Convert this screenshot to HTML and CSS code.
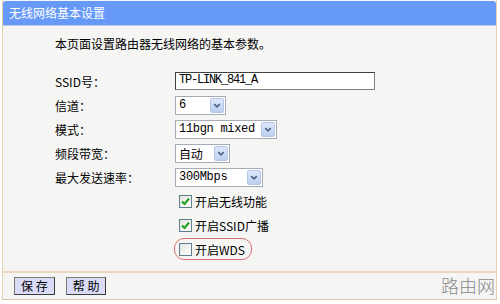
FILE: index.html
```html
<!DOCTYPE html>
<html lang="zh-CN">
<head>
    <meta charset="UTF-8">
    <title>无线网络基本设置</title>
    <link rel="stylesheet" href="styles.css">
</head>
<body>
    <div class="panel">
        <div class="panel-title">无线网络基本设置</div>

        <div class="panel-body">
            <p class="intro">本页面设置路由器无线网络的基本参数。</p>

            <div class="form">
                <div class="form-row">
                    <label class="form-label">SSID号：</label>
                    <div class="text-input">TP-LINK_841_A</div>
                </div>
                <div class="form-row">
                    <label class="form-label">信道：</label>
                    <div class="select select-channel">
                        <span class="select-value">6</span>
                        <span class="select-arrow"><svg viewBox="0 0 13 13" width="13" height="13"><path d="M3.5 5 L6.5 8 L9.5 5" fill="none" stroke="#4d6185" stroke-width="1.8"/></svg></span>
                    </div>
                </div>
                <div class="form-row">
                    <label class="form-label">模式：</label>
                    <div class="select select-mode">
                        <span class="select-value">11bgn mixed</span>
                        <span class="select-arrow"><svg viewBox="0 0 13 13" width="13" height="13"><path d="M3.5 5 L6.5 8 L9.5 5" fill="none" stroke="#4d6185" stroke-width="1.8"/></svg></span>
                    </div>
                </div>
                <div class="form-row">
                    <label class="form-label">频段带宽：</label>
                    <div class="select select-width">
                        <span class="select-value cjk">自动</span>
                        <span class="select-arrow"><svg viewBox="0 0 13 13" width="13" height="13"><path d="M3.5 5 L6.5 8 L9.5 5" fill="none" stroke="#4d6185" stroke-width="1.8"/></svg></span>
                    </div>
                </div>
                <div class="form-row">
                    <label class="form-label">最大发送速率：</label>
                    <div class="select select-rate">
                        <span class="select-value">300Mbps</span>
                        <span class="select-arrow"><svg viewBox="0 0 13 13" width="13" height="13"><path d="M3.5 5 L6.5 8 L9.5 5" fill="none" stroke="#4d6185" stroke-width="1.8"/></svg></span>
                    </div>
                </div>

                <div class="form-row check-row">
                    <span class="checkbox"><svg viewBox="0 0 11 11" width="11" height="11"><path d="M2 5.5 L4.5 8 L9 2.5" fill="none" stroke="#21a121" stroke-width="2"/></svg></span>
                    <span class="check-text">开启无线功能</span>
                </div>
                <div class="form-row check-row">
                    <span class="checkbox"><svg viewBox="0 0 11 11" width="11" height="11"><path d="M2 5.5 L4.5 8 L9 2.5" fill="none" stroke="#21a121" stroke-width="2"/></svg></span>
                    <span class="check-text">开启SSID广播</span>
                </div>
                <div class="form-row check-row">
                    <span class="highlight">
                        <span class="checkbox"></span>
                        <span class="check-text">开启WDS</span>
                    </span>
                </div>
            </div>
        </div>

        <div class="panel-footer">
            <button class="btn">保 存</button>
            <button class="btn">帮 助</button>
            <span class="watermark">路由网</span>
        </div>
    </div>
</body>
</html>
```

FILE: styles.css
```css
* {
    margin: 0;
    padding: 0;
    box-sizing: border-box;
}

body {
    background: #ffffff;
    font-family: "Noto Sans CJK SC", "DejaVu Sans", sans-serif;
    font-size: 12px;
    color: #000;
}

.panel {
    position: relative;
    width: 495px;
    height: 300px;
    margin-left: 2px;
    background: #f5f5f4;
    border-left: 1px solid #e2cfb0;
    border-right: 1px solid #e2cfb0;
    border-bottom: 1px solid #d8c6a6;
    display: flex;
    flex-direction: column;
}

.panel-title {
    height: 25px;
    line-height: 24px;
    margin-top: 1px;
    padding-left: 6px;
    background: #6699f8;
    color: #fff;
    font-size: 12px;
    border-radius: 3px 3px 0 0;
    border-bottom: 1px solid #b8c8e8;
}

.panel-body {
    flex: 1;
    padding: 10px 0 0 52px;
    border-bottom: 2px solid #ead7bd;
}

.intro {
    height: 16px;
    line-height: 16px;
    font-size: 12px;
}

.form {
    margin-top: 17px;
}

.form-row {
    display: flex;
    align-items: center;
    height: 24px;
}

.form-label {
    width: 120px;
    font-size: 12px;
}

.text-input {
    width: 200px;
    height: 18px;
    line-height: 15px;
    padding-left: 3px;
    background: #fff;
    border: 1px solid #808080;
    border-top-color: #404040;
    border-left-color: #404040;
    font-family: "Liberation Mono", monospace;
    font-size: 12px;
    letter-spacing: -1.2px;
}

.select {
    display: flex;
    align-items: center;
    justify-content: space-between;
    height: 19px;
    padding: 0 1px 0 3px;
    background: #fff;
    border: 1px solid #a5acb5;
}

.select-value {
    font-family: "Liberation Mono", monospace;
    font-size: 12px;
    letter-spacing: -0.3px;
}

.select-value.cjk {
    font-family: "Noto Sans CJK SC", sans-serif;
}

.select-arrow {
    display: flex;
    width: 14px;
    height: 15px;
    align-items: center;
    justify-content: center;
    background: linear-gradient(#dde8fb, #bccff2);
    border: 1px solid #b6c7e6;
    border-radius: 2px;
}

.select-channel { width: 51px; }
.select-mode    { width: 102px; }
.select-width   { width: 55px; }
.select-rate    { width: 88px; }

.check-row {
    padding-left: 124px;
}

.checkbox {
    display: inline-flex;
    align-items: center;
    justify-content: center;
    width: 13px;
    height: 13px;
    margin-right: 3px;
    background: linear-gradient(135deg, #e4e4df, #ffffff);
    border: 1px solid #5f7f8f;
}

.check-text {
    font-size: 12px;
}

.highlight {
    display: inline-flex;
    align-items: center;
    height: 22px;
    margin-left: -5px;
    padding: 0 6px 0 4px;
    border: 1px solid #d77070;
    border-radius: 10px;
}

.panel-footer {
    position: relative;
    display: flex;
    align-items: center;
    gap: 11px;
    height: 26px;
    padding-left: 11px;
}

.btn {
    height: 18px;
    padding: 0 6px;
    background: #d9dbf7;
    border: 1px solid #3c3c3c;
    border-top-color: #7a7a7a;
    border-left-color: #7a7a7a;
    font-family: "Noto Sans CJK SC", sans-serif;
    font-size: 12px;
    line-height: 14px;
    color: #000;
}

.watermark {
    position: absolute;
    right: 1px;
    bottom: 1px;
    font-size: 18px;
    font-weight: 300;
    color: #8a8a8a;
    letter-spacing: 0;
}
```
